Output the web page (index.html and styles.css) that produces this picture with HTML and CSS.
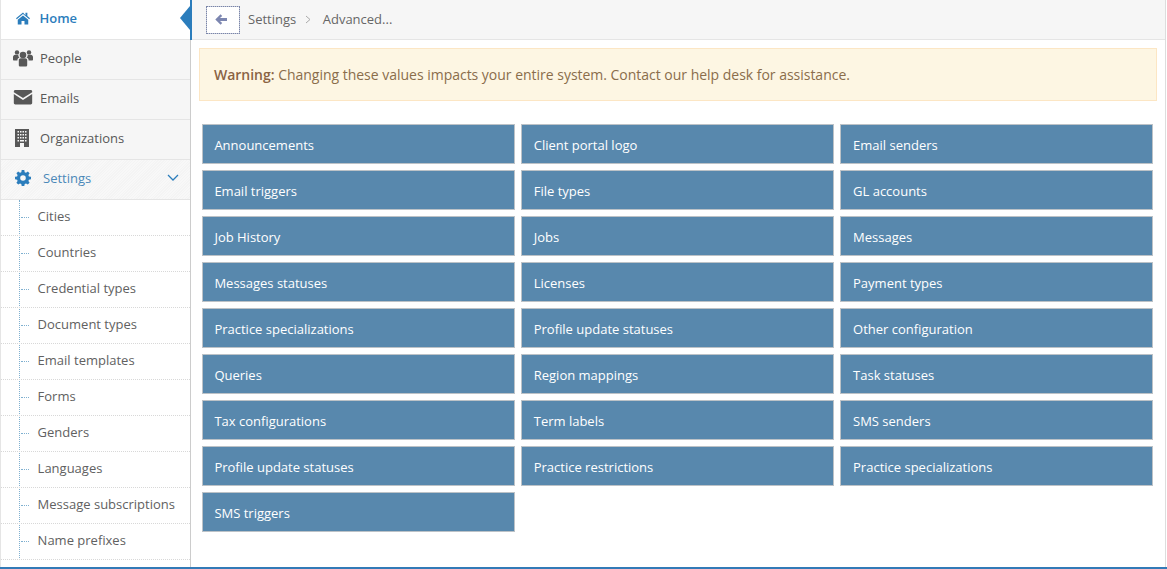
FILE: index.html
```html
<!DOCTYPE html>
<html lang="en">
<head>
<meta charset="utf-8">
<title>Settings - Advanced</title>
<link rel="stylesheet" href="styles.css">
</head>
<body>
<div class="app">
  <nav class="sidebar">
    <a class="nav-item active">
      <svg class="nav-icon icon-home" viewBox="0 0 18 16"><path d="M9 1.6 1 8.400l.9 1L9 3.500l7.100 5.900.9-1-3-2.600V2h-2.200v2.900z"/><path d="M9 5 3 10v5.500h4.300v-4h3.400v4H15V10z"/></svg>
      <span>Home</span>
    </a>
    <a class="nav-item">
      <svg class="nav-icon" viewBox="0 0 20 18"><circle cx="10" cy="6" r="3.300"/><circle cx="4" cy="3.400" r="2.200"/><circle cx="16" cy="3.400" r="2.200"/><path d="M5.800 11c0-1 1-1.800 2-1.800h4.400c1 0 2 .8 2 1.800v5.200c0 .8-.7 1.300-1.400 1.300H7.200c-.7 0-1.400-.5-1.400-1.300z"/><path d="M0 8c0-1.300 1-2.300 2.200-2.300h3C5.500 7.500 5.800 8 6.600 8.600 5 9 4.500 10 4.400 11.500H1C.4 11.500 0 11 0 10.400z"/><path d="M20 8c0-1.300-1-2.300-2.200-2.300h-3c-.3 1.800-.6 2.300-1.400 2.900 1.600.4 2.100 1.400 2.200 2.900H19c.6 0 1-.5 1-1.100z"/></svg>
      <span>People</span>
    </a>
    <a class="nav-item">
      <svg class="nav-icon icon-mail" viewBox="0 0 19 15"><path d="M1.500 0h16C18.300 0 19 .7 19 1.500v.7l-9.500 6-9.500-6v-.7C0 .7.700 0 1.500 0z"/><path d="M0 4.200 9.500 10.300 19 4.200v9.300c0 .8-.7 1.500-1.500 1.500h-16C.7 15 0 14.300 0 13.500z"/></svg>
      <span>Emails</span>
    </a>
    <a class="nav-item">
      <svg class="nav-icon" viewBox="0 0 20 18"><path fill-rule="evenodd" d="M2 0h14v18H2zM4.500 2v1.500H6V2zM7 2v1.500h1.500V2zM9.500 2v1.500H11V2zM12 2v1.500h1.500V2zM4.500 5v1.500H6V5zM7 5v1.500h1.500V5zM9.500 5v1.500H11V5zM12 5v1.500h1.500V5zM4.500 8v1.500H6V8zM7 8v1.500h1.500V8zM9.500 8v1.500H11V8zM12 8v1.500h1.500V8zM4.500 11v1.500H6V11zM7 11v1.500h4V11zM12 11v1.500h1.500V11zM7 14v4h4v-4z"/></svg>
      <span>Organizations</span>
    </a>
    <a class="nav-item open">
      <svg class="nav-icon icon-gear" viewBox="0 0 16 16"><path fill-rule="evenodd" d="M6.700 0h2.600l.4 2.200 1.300.5L12.800 1.500l1.800 1.800-1.200 1.800.5 1.300 2.100.4v2.500l-2.100.4-.5 1.300 1.200 1.800-1.800 1.800-1.800-1.200-1.300.5-.4 2.100H6.700l-.4-2.100-1.300-.5-1.800 1.200-1.800-1.800 1.200-1.800-.5-1.300L0 9.300V6.800l2.100-.4.500-1.300L1.400 3.300l1.800-1.800L5 2.700l1.300-.5zM8 5.200a2.800 2.800 0 1 0 0 5.600 2.800 2.800 0 0 0 0-5.600z"/></svg>
      <span class="nav-label-wide">Settings</span>
      <svg class="chevron" viewBox="0 0 12 7"><path d="M1 1l5 5 5-5" fill="none" stroke="currentColor" stroke-width="1.300"/></svg>
    </a>
    <ul class="subnav">
      <li><span class="tick"></span>Cities</li>
      <li><span class="tick"></span>Countries</li>
      <li><span class="tick"></span>Credential types</li>
      <li><span class="tick"></span>Document types</li>
      <li><span class="tick"></span>Email templates</li>
      <li><span class="tick"></span>Forms</li>
      <li><span class="tick"></span>Genders</li>
      <li><span class="tick"></span>Languages</li>
      <li><span class="tick"></span>Message subscriptions</li>
      <li><span class="tick"></span>Name prefixes</li>
    </ul>
  </nav>
  <main class="content">
    <header class="topbar">
      <button class="back" type="button" aria-label="Back">
        <svg viewBox="0 0 12 11"><path d="M5.600.3 7.200 1.900 5 4h7v3H5l2.200 2.100-1.600 1.600L.3 5.500z"/></svg>
      </button>
      <span class="crumb">Settings</span>
      <svg class="sep" viewBox="0 0 6 9"><path d="M1 1l4 3.500L1 8" fill="none" stroke="currentColor"/></svg>
      <span class="crumb">Advanced...</span>
    </header>
    <div class="warning"><strong>Warning:</strong> Changing these values impacts your entire system. Contact our help desk for assistance.</div>
    <div class="tiles">
      <a class="tile">Announcements</a>
      <a class="tile">Client portal logo</a>
      <a class="tile">Email senders</a>
      <a class="tile">Email triggers</a>
      <a class="tile">File types</a>
      <a class="tile">GL accounts</a>
      <a class="tile">Job History</a>
      <a class="tile">Jobs</a>
      <a class="tile">Messages</a>
      <a class="tile">Messages statuses</a>
      <a class="tile">Licenses</a>
      <a class="tile">Payment types</a>
      <a class="tile">Practice specializations</a>
      <a class="tile">Profile update statuses</a>
      <a class="tile">Other configuration</a>
      <a class="tile">Queries</a>
      <a class="tile">Region mappings</a>
      <a class="tile">Task statuses</a>
      <a class="tile">Tax configurations</a>
      <a class="tile">Term labels</a>
      <a class="tile">SMS senders</a>
      <a class="tile">Profile update statuses</a>
      <a class="tile">Practice restrictions</a>
      <a class="tile">Practice specializations</a>
      <a class="tile">SMS triggers</a>
    </div>
  </main>
</div>
</body>
</html>
```
FILE: styles.css
```css
* { box-sizing: border-box; }
html, body { margin: 0; padding: 0; height: 100%; overflow: hidden; background: #fff; }
body { font-family: "Open Sans", sans-serif; font-size: 13px; color: #555; }

.app {
  display: flex;
  height: 569px;
  border-bottom: 2px solid #337ab7;
  overflow: hidden;
}

.sidebar {
  flex: 0 0 191px;
  background: #fff;
  border-left: 1px solid #e5e5e5;
  border-right: 1px solid #ccc;
}
.nav-item {
  position: relative;
  display: flex;
  align-items: center;
  height: 40px;
  padding: 0 10px 4px 12px;
  background: #f6f6f6;
  border-bottom: 1px solid #e5e5e5;
  color: #585858;
}
.nav-icon { width: 20px; height: 18px; margin-right: 7px; flex: none; fill: #585858; }
.icon-home { height: 14px; }
.icon-mail { height: 14.500px; }
.icon-gear { height: 16px; }
.nav-item.active { background: #fff; color: #2b7dbc; font-weight: 600; }
.nav-item.active span { margin-left: -.5px; }
.nav-item.active .nav-icon { fill: #2b7dbc; }
.nav-item.active::before {
  content: "";
  position: absolute;
  right: -2px;
  top: 0;
  bottom: -1px;
  width: 2px;
  background: #2b7dbc;
}
.nav-item.active::after {
  content: "";
  position: absolute;
  right: 0;
  top: 6px;
  width: 0;
  height: 0;
  border-top: 12px solid transparent;
  border-bottom: 12px solid transparent;
  border-right: 10px solid #2b7dbc;
}
.nav-item.open {
  color: #4b88b8;
  background: repeating-linear-gradient(135deg, #f8f8f8 0 1px, #f4f4f4 1px 2px);
}
.nav-item.open .nav-icon { fill: #2b7dbc; }
.nav-label-wide { margin-left: 3px; flex: 1; }
.chevron { width: 12px; height: 7px; margin-right: 1px; color: #2b7dbc; }

.subnav {
  position: relative;
  list-style: none;
  margin: 0;
  padding: 0;
}
.subnav::before {
  content: "";
  position: absolute;
  left: 18px;
  top: 0;
  bottom: 0;
  border-left: 1px dotted #7fb0d0;
}
.subnav li {
  position: relative;
  display: flex;
  align-items: center;
  height: 36px;
  padding: 0 0 4px 36.600px;
  border-bottom: 1px dotted #d8d8d8;
  color: #616161;
  white-space: nowrap;
}
.tick {
  position: absolute;
  left: 20px;
  top: 17px;
  width: 8px;
  border-top: 1px dotted #7fb0d0;
}

.content { flex: 1; min-width: 0; margin-right: 1px; border-right: 1px solid #ddd; }

.topbar {
  display: flex;
  align-items: center;
  height: 40px;
  padding: 0 0 2px 15px;
  background: #f6f6f6;
  border-bottom: 1px solid #e5e5e5;
  color: #666;
}
.back {
  display: flex;
  align-items: center;
  justify-content: center;
  width: 34px;
  height: 28px;
  margin: 2px 8px 0 0;
  padding: 0 4px 0 0;
  background: #fff;
  border: 1px dotted #7a86a8;
  outline: 1px solid rgba(122, 134, 168, .45);
  outline-offset: -1px;
}
.back svg { width: 12px; height: 11px; fill: #7c86b0; }
.sep { width: 6px; height: 9px; margin: 2px 12px 0 8.500px; color: #aaa; flex: none; }

.warning {
  height: 53px;
  margin: 8px 8px 0 8px;
  padding: 16px 14px 0;
  background: #fdf6e3;
  border: 1px solid #fce6c4;
  color: #8a6d4b;
  font-size: 14px;
  letter-spacing: -.018px;
  line-height: 20px;
  white-space: nowrap;
}
.warning strong { font-weight: 600; color: #8a6343; }

.tiles {
  display: grid;
  grid-template-columns: repeat(3, 313px);
  grid-auto-rows: 40px;
  column-gap: 6.330px;
  row-gap: 6px;
  margin: 23px 0 0 10.600px;
}
.tile {
  display: flex;
  align-items: center;
  padding: 2px 12px 0 11.800px;
  background: #5888ad;
  border: 1px solid #bcc2c7;
  color: #fff;
  white-space: nowrap;
}
```
